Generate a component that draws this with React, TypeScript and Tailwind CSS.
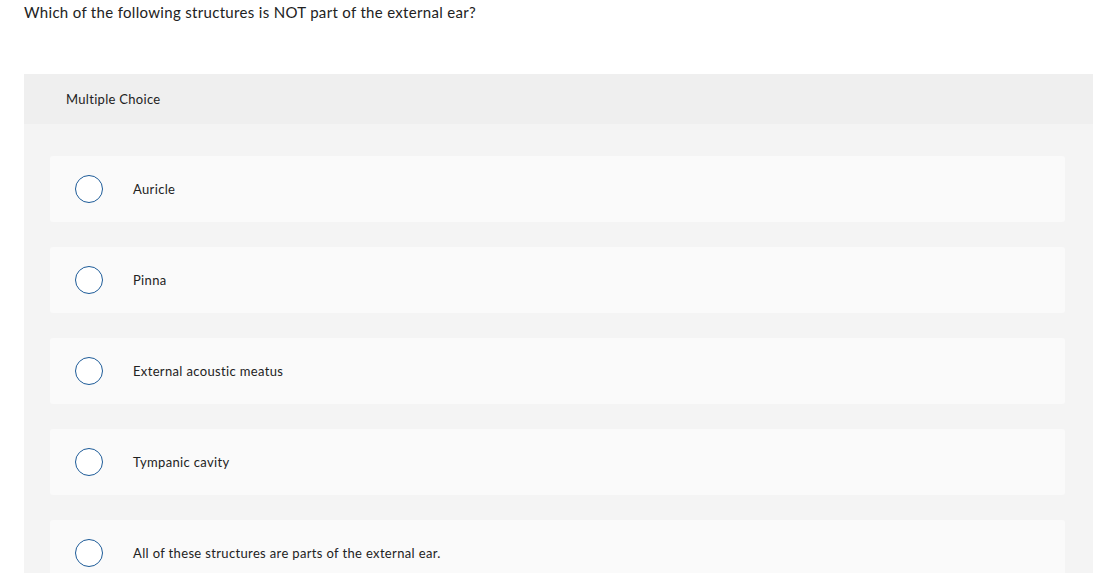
const options = [
  "Auricle",
  "Pinna",
  "External acoustic meatus",
  "Tympanic cavity",
  "All of these structures are parts of the external ear.",
];

export default function App() {
  return (
    <div className="h-[573px] overflow-hidden bg-white font-['Lato','Open_Sans',sans-serif] text-[#222]">
      <div className="px-6 pt-[2px] text-[15px] leading-[20px] tracking-[0.32px]">
        Which of the following structures is NOT part of the external ear?
      </div>

      <div className="ml-6 mr-3 mt-[52px] bg-[#f4f4f4]">
        <div className="flex h-[50px] items-center bg-[#efefef] pl-[42px] pt-[2px] text-[13px] tracking-[0.3px]">
          Multiple Choice
        </div>
        <div className="flex flex-col gap-[25px] pl-[26px] pr-[28px] pt-[32px]">
          {options.map((opt) => (
            <label
              key={opt}
              className="flex h-[66px] items-center rounded-[3px] bg-[#fafafa] pl-[25px]"
            >
              <span className="h-[28px] w-[28px] shrink-0 rounded-full border-[1.5px] border-[#1d5b98] bg-white" />
              <span className="ml-[30px] pt-[2px] text-[13px] tracking-[0.35px]">{opt}</span>
            </label>
          ))}
        </div>
      </div>
    </div>
  );
}
